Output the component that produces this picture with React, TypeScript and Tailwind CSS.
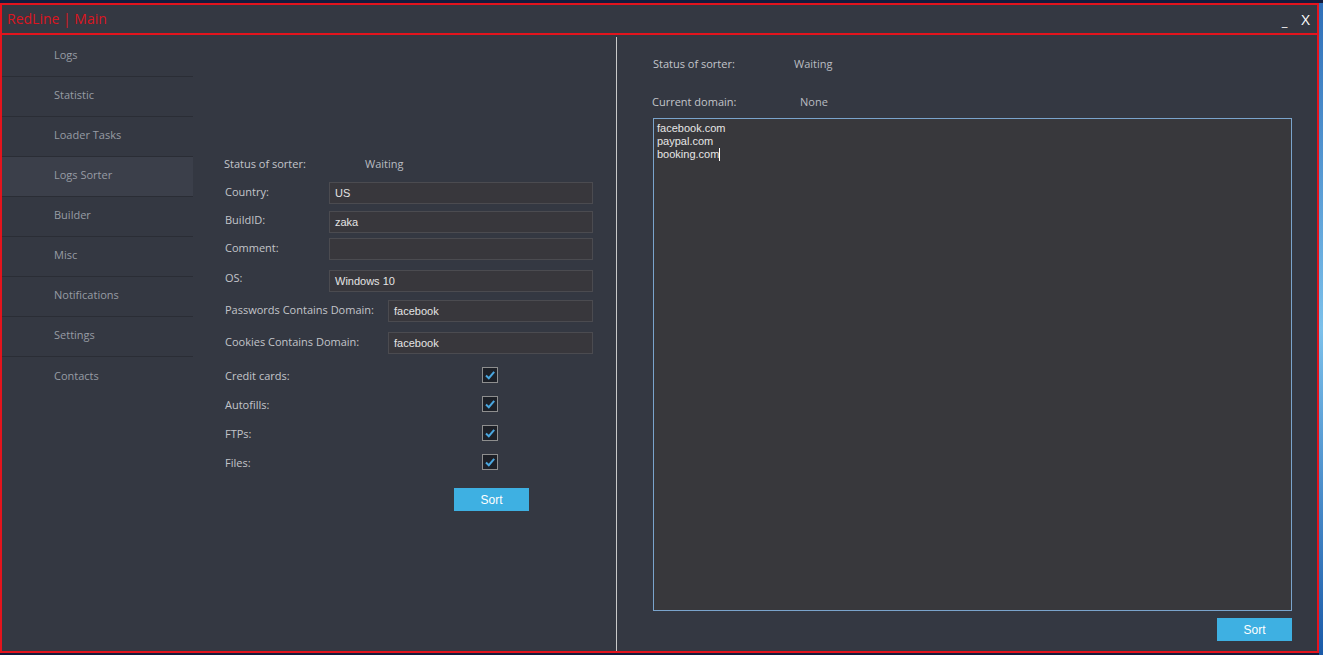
import React from "react";

const nav = ["Logs", "Statistic", "Loader Tasks", "Logs Sorter", "Builder", "Misc", "Notifications", "Settings", "Contacts"];

function Check() {
  return (
    <div className="w-[16px] h-[16px] border border-[#8e8e8e] bg-[#1d2027] flex items-center justify-center">
      <svg width="12" height="12" viewBox="0 0 12 12">
        <polyline points="2,6.5 4.8,9.2 10.2,2.8" fill="none" stroke="#4aa6de" strokeWidth="2" />
      </svg>
    </div>
  );
}

function Field({ label, value, labelW, inputW, mt, lmt }: { label: string; value: string; labelW: string; inputW: string; mt: string; lmt: string }) {
  return (
    <div className={`flex items-start h-[22px] ${mt}`}>
      <div className={`${labelW} ${lmt} text-[11px] leading-[15px] text-[#c3c5ca]`}>{label}</div>
      <div className={`${inputW} h-[22px] border border-[#4b4b50] bg-[#38373c] pl-[5px] flex items-center text-[11px] text-[#e4e4e4] font-['Liberation_Sans',sans-serif]`}>{value}</div>
    </div>
  );
}

function CheckRow({ label, mt }: { label: string; mt: string }) {
  return (
    <div className={`flex items-center h-[16px] ${mt}`}>
      <div className="w-[258px] pl-px text-[11px] leading-[15px] text-[#c3c5ca]">{label}</div>
      <Check />
    </div>
  );
}

export default function App() {
  return (
    <div className="w-[1323px] h-[655px] bg-[#151c3e] pt-[3px] overflow-hidden font-['Open_Sans',sans-serif] flex">
      <div className="w-[1319px] h-[650px] border-2 border-[#e3141d] bg-[#343842] flex flex-col">
        <div className="h-[30px] border-b-2 border-[#e3141d] flex items-center justify-between pl-[5px] pr-[7px]">
          <div className="text-[14px] text-[#dc1520] leading-none">RedLine | Main</div>
          <div className="flex items-center gap-[14px] text-white">
            <span className="text-[13px] leading-none mt-[4px]">_</span>
            <span className="text-[15px] leading-none">X</span>
          </div>
        </div>
        <div className="flex-1 flex">
          <div className="w-[191px] pt-[2px]">
            {nav.map((n, i) => (
              <div
                key={n}
                className={`h-[40px] ${i < nav.length - 1 ? "border-b border-[#2a2d35]" : ""} flex items-center pl-[52px] pb-[2px] text-[11px] text-[#979ca4] ${n === "Logs Sorter" ? "bg-[#3b3f4a]" : ""}`}
              >
                {n}
              </div>
            ))}
          </div>
          <div className="w-[423px] pl-[31px] pt-[121px]">
            <div className="flex items-center h-[15px] text-[11px] leading-[15px]">
              <div className="w-[141px] text-[#c3c5ca]">Status of sorter:</div>
              <div className="text-[#b9bcc1]">Waiting</div>
            </div>
            <Field label="Country:" value="US" labelW="w-[105px] pl-px" inputW="w-[264px]" mt="mt-[11px]" lmt="mt-[2px]" />
            <Field label="BuildID:" value="zaka" labelW="w-[105px] pl-px" inputW="w-[264px]" mt="mt-[7px]" lmt="mt-[1px]" />
            <Field label="Comment:" value="" labelW="w-[105px] pl-px" inputW="w-[264px]" mt="mt-[5px]" lmt="mt-[2px]" />
            <Field label="OS:" value="Windows 10" labelW="w-[105px] pl-px" inputW="w-[264px]" mt="mt-[10px]" lmt="mt-0" />
            <Field label="Passwords Contains Domain:" value="facebook" labelW="w-[164px] pl-px" inputW="w-[205px]" mt="mt-[8px]" lmt="mt-[2px]" />
            <Field label="Cookies Contains Domain:" value="facebook" labelW="w-[164px] pl-px" inputW="w-[205px]" mt="mt-[10px]" lmt="mt-[2px]" />
            <CheckRow label="Credit cards:" mt="mt-[13px]" />
            <CheckRow label="Autofills:" mt="mt-[13px]" />
            <CheckRow label="FTPs:" mt="mt-[13px]" />
            <CheckRow label="Files:" mt="mt-[13px]" />
            <div className="ml-[230px] mt-[18px] w-[75px] h-[23px] bg-[#3eb0e2] flex items-center justify-center text-[12px] text-white font-['Liberation_Sans',sans-serif]">
              Sort
            </div>
          </div>
          <div className="w-px bg-[#c9c9c9] mt-[2px]" />
          <div className="flex-1 pl-[36px] pt-[21px]">
            <div className="flex items-center h-[15px] text-[11px] leading-[15px]">
              <div className="w-[141px] text-[#c3c5ca]">Status of sorter:</div>
              <div className="text-[#b9bcc1]">Waiting</div>
            </div>
            <div className="flex items-center h-[15px] text-[11px] leading-[15px] mt-[23px] -ml-px">
              <div className="w-[148px] text-[#c3c5ca]">Current domain:</div>
              <div className="text-[#b9bcc1]">None</div>
            </div>
            <div className="mt-[9px] w-[639px] h-[493px] border border-[#7aa4cc] bg-[#38383c] pl-[3px] pt-[3px] text-[11px] leading-[13px] text-[#e6e6e6] font-['Liberation_Sans',sans-serif]">
              <div>facebook.com</div>
              <div>paypal.com</div>
              <div className="flex items-center">
                booking.com<span className="inline-block w-px h-[13px] bg-white" />
              </div>
            </div>
            <div className="ml-[564px] mt-[7px] w-[75px] h-[23px] bg-[#3eb0e2] flex items-center justify-center text-[12px] text-white font-['Liberation_Sans',sans-serif]">
              Sort
            </div>
          </div>
        </div>
      </div>
      <div className="flex-1 bg-gradient-to-b from-[#2f6fb8] via-[#7cc0ea] to-[#1a5aa8]" />
    </div>
  );
}
